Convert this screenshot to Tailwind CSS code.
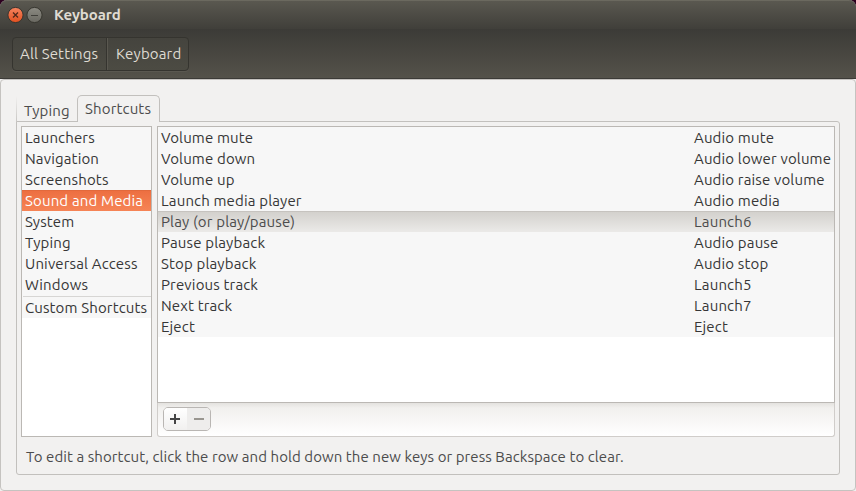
<!DOCTYPE html>
<html lang="en">
<head>
<meta charset="utf-8">
<title>Keyboard</title>
<script src="https://cdn.jsdelivr.net/npm/@tailwindcss/browser@4"></script>
</head>
<body class="bg-[#2c001e]">
<div class="flex h-[491px] w-[856px] flex-col overflow-hidden rounded-t-[7px] bg-[#f2f1f0] font-['Ubuntu','Noto_Sans',sans-serif] text-[15px] leading-[21px] tracking-[0.15px] text-[#363636]">
  <header class="h-[79px] shrink-0 border-b border-[#3c3b37] bg-[#45443f]">
    <div class="flex h-[29px] items-center rounded-t-[7px] border-t border-[#6b695f] bg-linear-to-b from-[#5a5850] to-[#403f3a] pl-[7px]">
      <svg class="mr-[11px] h-[18px] w-[36px]" viewBox="0 0 36 18">
        <defs>
          <linearGradient id="close" x2="0" y2="1"><stop stop-color="#f7845f"/><stop offset="1" stop-color="#e2501f"/></linearGradient>
          <linearGradient id="min" x2="0" y2="1"><stop stop-color="#8c8b83"/><stop offset="1" stop-color="#696861"/></linearGradient>
        </defs>
        <circle cx="8.5" cy="9" r="7.6" fill="url(#close)" stroke="#37342f"/>
        <path d="M6 6.5l5 5m0-5l-5 5" stroke="#50281a" stroke-width="1.3"/>
        <circle cx="27.5" cy="9" r="7.6" fill="url(#min)" stroke="#37362f"/>
        <path d="M24 9.5h7" stroke="#403f3a" stroke-width="1.1"/>
      </svg>
      <h1 class="pb-[2px] text-[15px] font-bold tracking-[-0.08px] text-[#dfdbd2]">Keyboard</h1>
    </div>
    <nav class="flex h-[49px] bg-linear-to-b from-[#3c3b37] to-[#54524a] pt-[8px] pl-[12px]">
      <div class="flex h-[34px] w-[177px] rounded-[4px] border border-[#35342f] bg-linear-to-b from-[#45443e] to-[#4c4b43] leading-[32px] text-[#dfdbd2] shadow-[0_1px_0_#5a5850]">
        <span class="w-[94px] border-r border-[#35342f] pl-[7px] whitespace-nowrap">All Settings</span>
        <span class="grow rounded-r-[3px] border-l border-[#5a5850] pl-[8px]">Keyboard</span>
      </div>
    </nav>
  </header>
  <main class="flex h-[412px] flex-col rounded-[4px] border border-[#c5c3c0] px-[15px] pt-[15px]">
    <div class="relative z-10 -mb-px flex h-[27px] shrink-0 items-end text-[#4c4c4c]">
      <span class="flex h-[26px] w-[61px]"><i class="w-px bg-linear-to-b from-[#f2f1f0] to-[#c8c6c3]"></i><span class="pt-[4px] pl-[7px]">Typing</span></span>
      <span class="h-[27px] w-[83px] rounded-t-[5px] border border-b-0 border-[#c2c0bd] bg-[#f2f1f0] pt-[2px] pl-[7px]">Shortcuts</span>
    </div>
    <section class="h-[354px] w-[824px] shrink-0 rounded-[3px] rounded-tl-none border border-[#c2c0bd] p-[4px]">
      <div class="flex h-[311px] gap-[5px]">
        <ul class="w-[131px] border border-[#bbb8b4] bg-white whitespace-nowrap *:h-[21px] *:bg-[#f7f7f7] *:pl-[3px]">
          <li>Launchers</li>
          <li>Navigation</li>
          <li>Screenshots</li>
          <li class="border-t border-[#e2693c] bg-linear-to-b from-[#ed6f41] to-[#f68456] leading-[20px] text-white">Sound and Media</li>
          <li>System</li>
          <li>Typing</li>
          <li>Universal Access</li>
          <li>Windows</li>
          <li class="h-[2px]! pt-px pl-px!"><hr class="border-[#d7d6d4]"></li>
          <li>Custom Shortcuts</li>
        </ul>
        <div class="flex w-[678px] flex-col">
          <div class="h-[277px] border border-[#bbb8b4] bg-white *:flex *:h-[21px] *:bg-[#f7f7f7] *:pl-[3px] [&_span]:w-[533px]">
            <div><span>Volume mute</span>Audio mute</div>
            <div><span>Volume down</span>Audio lower volume</div>
            <div><span>Volume up</span>Audio raise volume</div>
            <div><span>Launch media player</span>Audio media</div>
            <div class="border-t border-[#c6c3bf] bg-linear-to-b from-[#d3d1cd] to-[#ebeae8] leading-[20px] text-[#4c4c4c]"><span>Play (or play/pause)</span>Launch6</div>
            <div><span>Pause playback</span>Audio pause</div>
            <div><span>Stop playback</span>Audio stop</div>
            <div><span>Previous track</span>Launch5</div>
            <div><span>Next track</span>Launch7</div>
            <div><span>Eject</span>Eject</div>
          </div>
          <div class="h-[34px] rounded-b-[3px] border border-t-0 border-[#d0cdca] bg-linear-to-b from-[#e4e2df] via-[#f1f0ee] via-15% to-white pt-[4px] pl-[5px]">
            <div class="flex h-[24px] w-[48px] overflow-hidden rounded-[5px] border border-[#b9b6b3]">
              <button class="w-[23px] bg-linear-to-b from-white to-[#f1f0ef]" aria-label="Add"><svg class="h-[22px] w-[23px]" viewBox="0 0 23 22"><path d="M6 11h10M11 6v10" stroke="#454545" stroke-width="2"/></svg></button>
              <button class="w-[23px] bg-[#eeedec]" aria-label="Remove"><svg class="h-[22px] w-[23px]" viewBox="0 0 23 22"><path d="M7 11h10" stroke="#999690" stroke-width="2"/></svg></button>
            </div>
          </div>
        </div>
      </div>
      <p class="pt-[9px] pl-[5px] tracking-[0.07px] text-[#4c4c4c]">To edit a shortcut, click the row and hold down the new keys or press Backspace to clear.</p>
    </section>
  </main>
</div>
</body>
</html>
